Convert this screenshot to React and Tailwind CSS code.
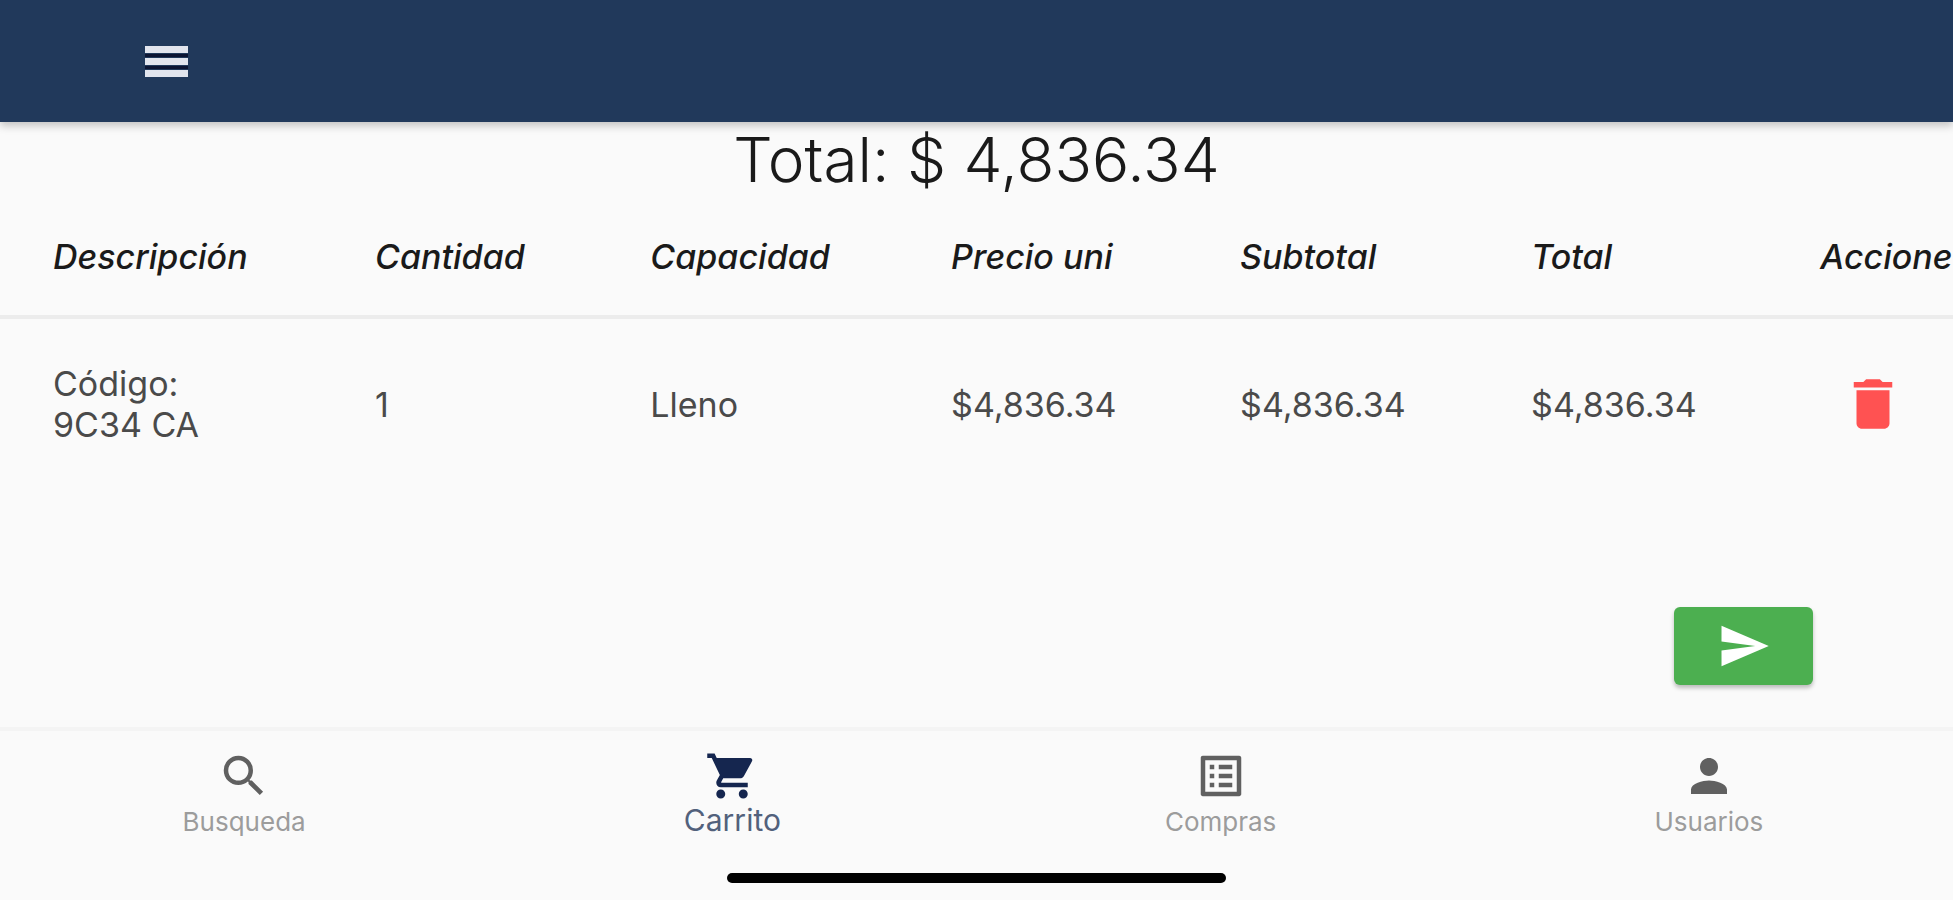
import { useState } from "react";
import { MdDelete, MdListAlt, MdPerson, MdSearch, MdSend, MdShoppingCart } from "react-icons/md";

const products = [
  {
    id: 1,
    code: "9C34 CA",
    quantity: 1,
    capacity: "Lleno",
    price: 4836.34,
  },
];

const tabs = [
  { name: "Busqueda", Icon: MdSearch },
  { name: "Carrito", Icon: MdShoppingCart },
  { name: "Compras", Icon: MdListAlt },
  { name: "Usuarios", Icon: MdPerson },
];

function money(value) {
  return value.toLocaleString("en-US", { minimumFractionDigits: 2 });
}

function Header() {
  return (
    <header className="relative flex h-[122px] items-center bg-[#21395b] px-[145px] shadow-[0_4px_8px_rgba(0,0,0,0.22)]">
      <button type="button" aria-label="Menú">
        <svg viewBox="0 0 43 31" className="h-[31px] w-[43px] fill-[#e2e5ee]">
          <path d="M0 0h43v7H0zM0 12h43v7H0zM0 24h43v7H0z" />
          <path d="M0 8h43v3H0zM0 20h43v3H0z" fill="#0c1533" />
        </svg>
      </button>
    </header>
  );
}

function CartTable({ items, onDelete }) {
  return (
    <table className="w-full table-fixed text-left whitespace-nowrap">
      <colgroup>
        <col className="w-[19.2%]" />
        <col className="w-[14.1%]" />
        <col className="w-[15.4%]" />
        <col className="w-[14.8%]" />
        <col className="w-[14.9%]" />
        <col className="w-[14.8%]" />
        <col />
      </colgroup>
      <thead>
        <tr className="h-[120px] border-b-4 border-[#ececec] text-[34px] text-[#1a1a1a] italic">
          <th className="pl-[53px] font-medium">Descripción</th>
          <th className="font-medium">Cantidad</th>
          <th className="font-medium">Capacidad</th>
          <th className="font-medium">Precio uni</th>
          <th className="font-medium">Subtotal</th>
          <th className="font-medium">Total</th>
          <th className="font-medium">Accione</th>
        </tr>
      </thead>
      <tbody>
        {items.map((item) => (
          <tr key={item.id} className="h-[172px] text-[34px] leading-[41px] text-[#4a4a4a]">
            <td className="pl-[53px]">
              Código:
              <br />
              {item.code}
            </td>
            <td>{item.quantity}</td>
            <td>{item.capacity}</td>
            <td>${money(item.price)}</td>
            <td>${money(item.price * item.quantity)}</td>
            <td>${money(item.price * item.quantity)}</td>
            <td className="pl-5">
              <button
                type="button"
                aria-label="Eliminar"
                className="block text-[#ff5252]"
                onClick={() => onDelete(item.id)}
              >
                <MdDelete className="size-[66px]" />
              </button>
            </td>
          </tr>
        ))}
      </tbody>
    </table>
  );
}

function BottomNav({ active, onChange }) {
  return (
    <nav className="border-t-4 border-[#f4f4f4] pt-[18px]">
      <div className="grid grid-cols-4 items-start">
        {tabs.map(({ name, Icon }) => (
          <button
            key={name}
            type="button"
            className="flex flex-col items-center"
            onClick={() => onChange(name)}
          >
            <Icon className={name === active ? "size-[54px] text-[#15264f]" : "size-[54px] text-[#606060]"} />
            <span
              className={
                name === active
                  ? "text-[30px] leading-[34px] text-[#52617c]"
                  : "text-[26px] leading-[38px] text-[#9c9c9c]"
              }
            >
              {name}
            </span>
          </button>
        ))}
      </div>
      {/* home indicator */}
      <div className="mx-auto mt-8 mb-[17px] h-[10px] w-[25.6%] rounded-full bg-black" />
    </nav>
  );
}

export default function App() {
  const [items, setItems] = useState(products);
  const [active, setActive] = useState("Carrito");

  const total = items.reduce((sum, item) => sum + item.price * item.quantity, 0);

  return (
    <div className="flex min-h-screen flex-col overflow-x-hidden bg-[#fafafa] font-['Inter',sans-serif]">
      <Header />
      <main className="flex flex-1 flex-col">
        <h1 className="text-center text-[62px] leading-[75px] font-light text-[#1a1a1a]">
          Total: $ {money(total)}
        </h1>
        <CartTable items={items} onDelete={(id) => setItems(items.filter((item) => item.id !== id))} />
        <button
          type="button"
          aria-label="Enviar"
          className="mt-auto mr-[140px] mb-[42px] flex h-[78px] w-[139px] items-center justify-center self-end rounded-md bg-[#4caf50] text-white shadow-[0_3px_4px_rgba(0,0,0,0.25)]"
        >
          <MdSend className="size-[54px]" />
        </button>
      </main>
      <BottomNav active={active} onChange={setActive} />
    </div>
  );
}
